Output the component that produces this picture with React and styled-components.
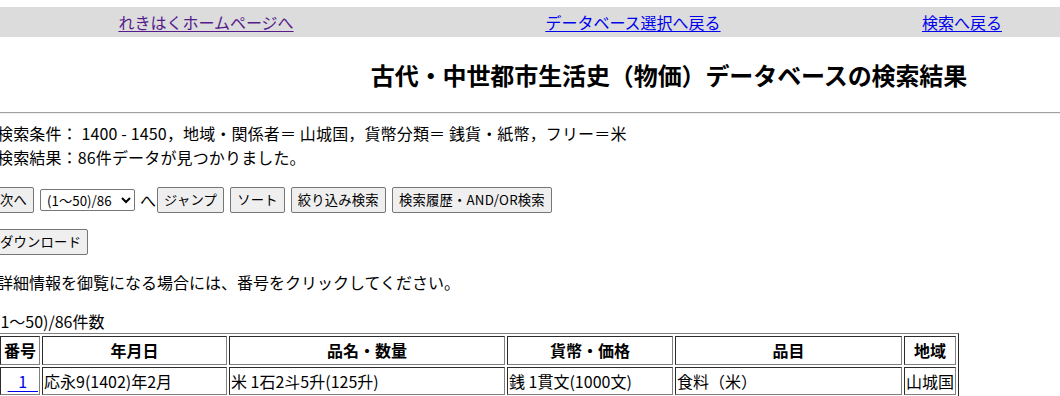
import React from "react";
import styled, { createGlobalStyle } from "styled-components";

const Global = createGlobalStyle`
  html, body { margin: 0; padding: 0; background: #fff; overflow: hidden; }
  body {
    font-family: "Noto Sans CJK JP", "Noto Sans", sans-serif;
    font-size: 16px;
    color: #000;
  }
`;

const Page = styled.div`
  padding-top: 7px;
`;

const NavBar = styled.nav`
  display: grid;
  grid-template-columns: 412px 442px 1fr;
  height: 30px;
  align-items: center;
  background: #dcdcdc;
`;

const NavCell = styled.div`
  text-align: center;
  padding-left: ${(p) => p.$shift || 0}px;
  line-height: 30px;
`;

const NavLink = styled.a`
  color: ${(p) => (p.$visited ? "#551a8b" : "#0000ee")};
  text-decoration: underline;
  text-underline-offset: 2px;
  cursor: pointer;
`;

const Header = styled.header`
  display: flex;
  justify-content: center;
  padding-left: 278px;
  height: 75px;
  align-items: center;
`;

const Title = styled.h2`
  margin: 0;
  font-size: 24px;
  font-weight: bold;
  line-height: 32px;
  letter-spacing: -0.1px;
`;

const Rule = styled.hr`
  margin: 0;
  border: none;
  border-top: 1px solid #a0a0a0;
  border-bottom: 1px solid #eeeeee;
  height: 0;
`;

const Content = styled.main`
  margin-left: -3px;
  padding-top: 7px;
`;

const Lines = styled.p`
  margin: 0;
  line-height: 24px;
  letter-spacing: 0.15px;
`;

const Row = styled.div`
  display: flex;
  align-items: center;
  gap: ${(p) => p.$gap ?? 6}px;
  margin-left: -4px;
  margin-top: ${(p) => p.$top}px;
  height: 26px;
`;

const Button = styled.button`
  font-family: "Noto Sans CJK JP", "Noto Sans", sans-serif;
  font-size: 13.33px;
  height: 26px;
  padding: 0 6px;
  background: #efefef;
  color: #000;
  border: 1px solid #767676;
  border-radius: 2px;
  line-height: 1;
  letter-spacing: 0.2px;
`;

const Select = styled.select`
  font-family: "Noto Sans CJK JP", "Noto Sans", sans-serif;
  font-size: 13.33px;
  width: 95px;
  height: 22px;
  border: 1px solid #767676;
  border-radius: 2px;
  background: #fff;
  color: #000;
  padding: 0 2px;
`;

const Inline = styled.span`
  font-size: 16px;
  margin-left: -1px;
  margin-right: -5px;
`;

const Note = styled.p`
  margin: ${(p) => p.$top}px 0 0 ${(p) => p.$shift || 0}px;
  line-height: 24px;
`;

const Table = styled.table`
  border-collapse: separate;
  border-spacing: 2px;
  border: 1px outset #808080;
  table-layout: fixed;
  width: 962px;
`;

const Th = styled.th`
  width: ${(p) => p.$w}px;
  border: 1px inset #808080;
  padding: 1px;
  font-weight: bold;
  text-align: center;
  line-height: 25px;
  white-space: nowrap;
`;

const Td = styled.td`
  border: 1px inset #808080;
  padding: 1px;
  line-height: 24px;
  text-align: ${(p) => p.$align || "left"};
  white-space: nowrap;
  overflow: hidden;
`;

const NumLink = styled.a`
  color: #0000ee;
  text-decoration: underline;
  text-underline-offset: 3px;
`;

const columns = [
  { label: "番号", w: 36 },
  { label: "年月日", w: 181 },
  { label: "品名・数量", w: 272 },
  { label: "貨幣・価格", w: 162 },
  { label: "品目", w: 223 },
  { label: "地域", w: 48 },
];

const rows = [
  {
    no: "1",
    date: "応永9(1402)年2月",
    item: "米 1石2斗5升(125升)",
    price: "銭 1貫文(1000文)",
    kind: "食料（米）",
    area: "山城国",
  },
  { no: "", date: "", item: "", price: "", kind: "", area: "" },
];

export default function App() {
  return (
    <Page>
      <Global />
      <NavBar>
        <NavCell>
          <NavLink $visited>れきはくホームページへ</NavLink>
        </NavCell>
        <NavCell>
          <NavLink>データベース選択へ戻る</NavLink>
        </NavCell>
        <NavCell $shift={10}>
          <NavLink>検索へ戻る</NavLink>
        </NavCell>
      </NavBar>
      <Header>
        <Title>古代・中世都市生活史（物価）データベースの検索結果</Title>
      </Header>
      <Rule />
      <Content>
        <Lines>
          検索条件： 1400 - 1450，地域・関係者＝ 山城国，貨幣分類＝ 銭貨・紙幣，フリー＝米
          <br />
          検索結果：86件データが見つかりました。
        </Lines>
        <Row $top={18}>
          <Button>次へ</Button>
          <Select defaultValue="1">
            <option value="1">(1～50)/86</option>
            <option value="2">(51～86)/86</option>
          </Select>
          <Inline>へ</Inline>
          <Button>ジャンプ</Button>
          <Button>ソート</Button>
          <Button>絞り込み検索</Button>
          <Button>検索履歴・AND/OR検索</Button>
        </Row>
        <Row $top={16}>
          <Button>ダウンロード</Button>
        </Row>
        <Note $top={15}>詳細情報を御覧になる場合には、番号をクリックしてください。</Note>
        <Note $top={15} $shift={-2}>(1～50)/86件数</Note>
        <Table>
          <thead>
            <tr>
              {columns.map((c) => (
                <Th key={c.label} $w={c.w}>
                  {c.label}
                </Th>
              ))}
            </tr>
          </thead>
          <tbody>
            {rows.map((r, i) => (
              <tr key={i}>
                <Td $align="right">
                  {r.no && <NumLink>{"\u00a0\u00a0\u00a01\u00a0\u00a0\u00a0"}</NumLink>}
                </Td>
                <Td>{r.date}</Td>
                <Td>{r.item}</Td>
                <Td>{r.price}</Td>
                <Td>{r.kind}</Td>
                <Td>{r.area}</Td>
              </tr>
            ))}
          </tbody>
        </Table>
      </Content>
    </Page>
  );
}
